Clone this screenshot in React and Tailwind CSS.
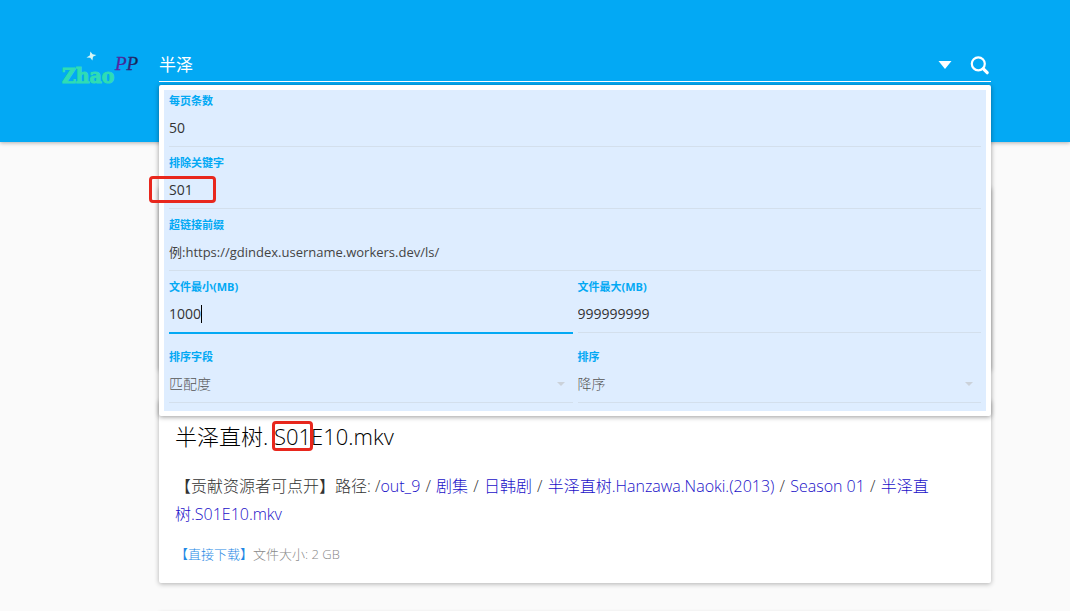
import { useState } from "react";

const PATH_LINKS = ["剧集", "日韩剧", "半泽直树.Hanzawa.Naoki.(2013)", "Season 01", "半泽直树.S01E10.mkv"];

function Logo() {
  return (
    <svg viewBox="0 0 80 40" className="block h-10 w-20" role="img" aria-label="Zhao PP">
      <defs>
        <linearGradient id="pp" x1="0" x2="1" y1="0" y2="0">
          <stop offset="0" stopColor="#6a1fb0" />
          <stop offset="0.5" stopColor="#3a2a8c" />
          <stop offset="1" stopColor="#0b2545" />
        </linearGradient>
      </defs>
      <path
        d="M29.4 3.4 L31.6 6.2 L35.4 7 L32 8.8 L31.4 12.6 L29.2 9.8 L25.4 9.4 L28.8 7.4 Z"
        fill="#d8f6f4"
      />
      <text
        x="1"
        y="35"
        fontSize="21"
        fontWeight="700"
        fontFamily="'DejaVu Serif Condensed', 'DejaVu Serif', serif"
        fill="#2fdcb4"
        stroke="#2fdcb4"
        strokeWidth="1"
      >
        Zhao
      </text>
      <text
        x="54"
        y="22"
        fontSize="19"
        fontStyle="italic"
        fontFamily="'Liberation Serif', serif"
        fill="url(#pp)"
        stroke="url(#pp)"
        strokeWidth="0.3"
      >
        PP
      </text>
    </svg>
  );
}

function SearchIcon() {
  return (
    <svg viewBox="0 0 20 20" className="h-5 w-5" fill="none" stroke="currentColor" strokeLinecap="round">
      <circle cx="8.3" cy="8.8" r="6.5" strokeWidth="2.2" />
      <path d="M13.4 13.9 L17.2 17.7" strokeWidth="3.2" />
    </svg>
  );
}

function Field({ id, label, children, active }) {
  return (
    <div
      className={
        active
          ? "-mb-px flex min-w-0 flex-1 flex-col border-b-2 border-[#03a9f4]"
          : "flex min-w-0 flex-1 flex-col border-b border-[#d3dfec]"
      }
    >
      <label htmlFor={id} className="h-[22px] text-[11px] leading-[22px] font-bold text-[#03a9f4]">
        {label}
      </label>
      <div className="relative flex h-[34px] items-center pb-0.5">{children}</div>
    </div>
  );
}

function TextField({ id, label, defaultValue, placeholder }) {
  return (
    <Field id={id} label={label}>
      <input
        id={id}
        defaultValue={defaultValue}
        placeholder={placeholder}
        className="w-full bg-transparent text-sm text-[#333] outline-none placeholder:text-[13px] placeholder:text-[#444]"
      />
    </Field>
  );
}

function SelectField({ id, label, options }) {
  return (
    <Field id={id} label={label}>
      <select
        id={id}
        className="w-full appearance-none bg-transparent text-sm font-light text-[#555] outline-none"
      >
        {options.map((option) => (
          <option key={option}>{option}</option>
        ))}
      </select>
      <svg viewBox="0 0 8 4" className="pointer-events-none absolute top-3.5 right-2 h-1 w-2 fill-[#cbd2da]">
        <path d="M0 0h8L4 4z" />
      </svg>
    </Field>
  );
}

function FilterPanel() {
  const [minSize, setMinSize] = useState("1000");

  return (
    <div className="absolute inset-x-0 top-full z-10 mt-1 rounded-xs bg-white p-[5px] font-normal shadow-[0_1px_5px_rgba(0,0,0,0.4)]">
      <form className="flex flex-col gap-[5px] bg-[#deedff] px-[5px] pb-2">
        <TextField id="page-size" label="每页条数" defaultValue="50" />
        <div className="relative flex">
          <TextField id="exclude" label="排除关键字" defaultValue="S01" />
          <span className="pointer-events-none absolute top-6 -left-5 h-[27px] w-[67px] rounded-sm border-3 border-[#e8271d]" />
        </div>
        <TextField
          id="prefix"
          label="超链接前缀"
          placeholder="例:https://gdindex.username.workers.dev/ls/"
        />
        <div className="flex gap-[5px]">
          <Field id="min-size" label="文件最小(MB)" active>
            <input
              id="min-size"
              value={minSize}
              onChange={(e) => setMinSize(e.target.value)}
              className="field-sizing-content bg-transparent text-sm text-[#333] caret-transparent outline-none"
            />
            <span className="h-[18px] w-px bg-black" />
          </Field>
          <TextField id="max-size" label="文件最大(MB)" defaultValue="999999999" />
        </div>
        <div className="mt-2 flex gap-[5px]">
          <SelectField id="sort-field" label="排序字段" options={["匹配度"]} />
          <SelectField id="sort-order" label="排序" options={["降序"]} />
        </div>
      </form>
    </div>
  );
}

function Card({ children }) {
  return (
    <article className="min-h-[183px] rounded-xs bg-white px-4 pt-4 pb-3 shadow-[0_1px_5px_rgba(0,0,0,0.3)]">
      {children}
    </article>
  );
}

export default function App() {
  return (
    <div className="min-h-screen bg-[#fafafa] font-['Open_Sans','Noto_Sans_CJK_SC',sans-serif] font-light">
      <header className="flex h-[142px] items-start bg-[#03a9f4] pt-12 pr-[79px] pl-[61px] shadow-[0_1px_4px_rgba(0,0,0,0.3)]">
        <a href="#" className="mr-[18px] shrink-0">
          <Logo />
        </a>
        <div className="relative flex h-[34px] flex-1 items-center border-b border-white text-white">
          <input
            aria-label="搜索"
            defaultValue="半泽"
            className="min-w-0 flex-1 bg-transparent text-[17px] font-normal outline-none"
          />
          <button aria-label="筛选" className="mr-4 p-0.5">
            <svg viewBox="0 0 14 8" className="h-2 w-3.5 fill-current">
              <path d="M0.5 0h13L7 8z" />
            </svg>
          </button>
          <button aria-label="搜索" className="pr-px">
            <SearchIcon />
          </button>
          <FilterPanel />
        </div>
      </header>

      <main className="flex h-[469px] flex-col gap-[30px] overflow-hidden pt-[45px] pr-[79px] pl-[159px]">
        <Card />
        <Card>
          <h2 className="text-[22px] leading-10 text-black">
            半泽直树.{" "}
            <span className="relative">
              S01
              <span className="pointer-events-none absolute -inset-x-0.5 inset-y-0 rounded-sm border-3 border-[#e8271d]" />
            </span>
            E10.mkv
          </h2>
          <p className="mt-4 pr-8 text-base leading-7 text-[#333]">
            【贡献资源者可点开】路径: /
            <a href="#" className="text-[#1a10c8]">
              out_9
            </a>
            {PATH_LINKS.map((name) => (
              <span key={name}>
                <span className="mx-px"> / </span>
                <a href="#" className="text-[#1a10c8]">
                  {name}
                </a>
              </span>
            ))}
          </p>
          <p className="mt-3.5 text-[13px] leading-6 text-[#888]">
            <a href="#" className="text-[#1e88e5]">
              【直接下载】
            </a>
            文件大小: 2 GB
          </p>
        </Card>
        <Card />
      </main>
    </div>
  );
}
